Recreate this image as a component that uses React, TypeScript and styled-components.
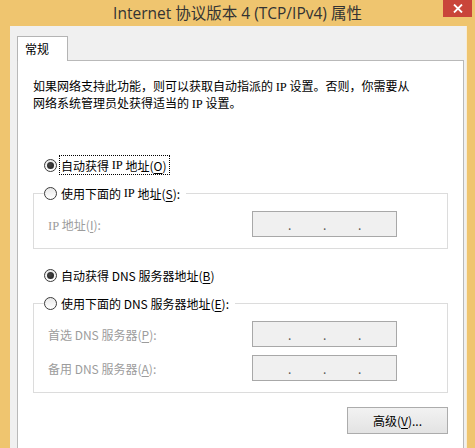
import React from "react";
import styled, { createGlobalStyle } from "styled-components";

const GlobalStyle = createGlobalStyle`
  html, body { margin: 0; padding: 0; }
  body {
    background: #efc56f;
    overflow: hidden;
    font-family: "Noto Sans CJK SC", "Noto Sans", sans-serif;
  }
`;

const Window = styled.div`
  width: 475px;
  height: 448px;
  display: flex;
  flex-direction: column;
  background: #efc56f;
  overflow: hidden;
`;

const TitleBar = styled.div`
  height: 26px;
  flex: none;
  display: grid;
  grid-template-columns: 1fr auto 1fr;
  align-items: center;
`;

const Title = styled.div`
  grid-column: 2;
  font-family: "Open Sans", "Noto Sans CJK SC", sans-serif;
  font-size: 15.5px;
  line-height: 26px;
  color: #333;
  white-space: nowrap;
`;

const CloseButton = styled.div`
  grid-column: 3;
  justify-self: end;
  align-self: start;
  width: 29px;
  height: 17px;
  margin-right: 3px;
  background: #c9453a;
  display: flex;
  align-items: center;
  justify-content: center;
`;

const Frame = styled.div`
  flex: 1;
  min-height: 0;
  display: flex;
  padding: 0 9px 0 10px;
`;

const Client = styled.div`
  flex: 1;
  display: flex;
  flex-direction: column;
  background: #f0f0f0;
  padding: 10px 2px 0 7px;
  box-shadow: 1px 0 0 #f7ecd6;
`;

const TabStrip = styled.div`
  display: flex;
  height: 25px;
  flex: none;
  margin-bottom: -1px;
`;

const Tab = styled.div`
  position: relative;
  z-index: 1;
  box-sizing: border-box;
  width: 51px;
  height: 25px;
  background: #fff;
  border: 1px solid #b4b4b4;
  border-bottom: none;
  padding-left: 7px;
  font-size: 12px;
  line-height: 24px;
  color: #000;
`;

const Panel = styled.div`
  flex: 1;
  display: flex;
  flex-direction: column;
  background: #fff;
  border: 1px solid #b9b9b9;
  border-bottom: none;
  padding: 16px 15px 0 15px;
`;

const Desc = styled.p`
  margin: 0;
  font-size: 12px;
  line-height: 17px;
  color: #000;
`;

const Serif = styled.span`
  font-family: "Liberation Serif", serif;
  font-size: 12.5px;
  line-height: 1;
`;

const RadioRow = styled.div<{ $top: number }>`
  display: flex;
  align-items: center;
  height: 20px;
  padding-left: 11px;
  margin-top: ${(p) => p.$top}px;
`;

const Circle = styled.span<{ $checked?: boolean }>`
  box-sizing: border-box;
  width: 13px;
  height: 13px;
  flex: none;
  border-radius: 50%;
  border: 1px solid #3a3a3a;
  background: linear-gradient(#e8e8e8, #ffffff);
  display: flex;
  align-items: center;
  justify-content: center;
  margin-right: 2px;
  &::after {
    content: "";
    display: ${(p) => (p.$checked ? "block" : "none")};
    width: 7px;
    height: 7px;
    border-radius: 50%;
    background: radial-gradient(circle at 40% 40%, #444, #1e1e1e);
  }
`;

const RadioLabel = styled.span<{ $focused?: boolean }>`
  box-sizing: border-box;
  height: 20px;
  display: flex;
  align-items: center;
  padding: 0 2px 0 1px;
  border: 1px ${(p) => (p.$focused ? "dotted #000" : "solid transparent")};
  font-size: 12px;
  color: #000;
  white-space: pre;
`;

const Key = styled.span`
  text-decoration: underline;
  text-underline-offset: 2px;
`;

const GroupBox = styled.fieldset`
  margin: 8px 0 0 0;
  padding: 0;
  border: 1px solid #dcdcdc;
  min-width: 0;
`;

const Legend = styled.legend`
  display: flex;
  align-items: center;
  height: 20px;
  padding: 0 3px 0 0;
  margin-left: 10px;
`;

const FieldGrid = styled.div`
  display: grid;
  grid-template-columns: 204px 145px;
  grid-auto-rows: 26px;
  row-gap: 8px;
  align-items: center;
  padding: 8px 0 11px 14px;
`;

const FieldLabel = styled.span`
  font-size: 12px;
  line-height: 17px;
  color: #9c9c9c;
  white-space: pre;
`;

const IpField = styled.div`
  box-sizing: border-box;
  height: 26px;
  border: 1px solid #a8a8a8;
  background: #f0f0f0;
  display: flex;
  justify-content: center;
  align-items: center;
  gap: 32px;
`;

const IpDot = styled.span`
  width: 3px;
  font-size: 12px;
  line-height: 12px;
  color: #555;
  text-align: center;
  margin-top: 1px;
`;

const ButtonRow = styled.div`
  display: flex;
  justify-content: flex-end;
  margin-top: 14px;
`;

const Button = styled.div`
  box-sizing: border-box;
  width: 101px;
  height: 27px;
  border: 1px solid #acacac;
  background: linear-gradient(#f2f2f2, #e3e3e3);
  display: flex;
  align-items: center;
  justify-content: center;
  font-size: 12px;
  color: #000;
`;

const IpBox = () => (
  <IpField>
    <IpDot>.</IpDot>
    <IpDot>.</IpDot>
    <IpDot>.</IpDot>
  </IpField>
);

export default function App() {
  return (
    <>
      <GlobalStyle />
      <Window>
        <TitleBar>
          <Title>Internet 协议版本 4 (TCP/IPv4) 属性</Title>
          <CloseButton>
            <svg width="10" height="9" viewBox="0 0 10 9">
              <path d="M1 0.5 L9 8.5 M9 0.5 L1 8.5" stroke="#fff" strokeWidth="1.8" />
            </svg>
          </CloseButton>
        </TitleBar>
        <Frame>
          <Client>
            <TabStrip>
              <Tab>常规</Tab>
            </TabStrip>
            <Panel>
              <Desc>
                如果网络支持此功能，则可以获取自动指派的 <Serif>IP</Serif> 设置。否则，你需要从
                <br />
                网络系统管理员处获得适当的 <Serif>IP</Serif> 设置。
              </Desc>

              <RadioRow $top={44}>
                <Circle $checked />
                <RadioLabel $focused>
                  自动获得 <Serif>IP</Serif> 地址(<Key>O</Key>)
                </RadioLabel>
              </RadioRow>

              <GroupBox>
                <Legend>
                  <Circle />
                  <RadioLabel>
                    使用下面的 <Serif>IP</Serif> 地址(<Key>S</Key>):
                  </RadioLabel>
                </Legend>
                <FieldGrid>
                  <FieldLabel>
                    <Serif>IP</Serif> 地址(<Key>I</Key>):
                  </FieldLabel>
                  <IpBox />
                </FieldGrid>
              </GroupBox>

              <RadioRow $top={16}>
                <Circle $checked />
                <RadioLabel>
                  自动获得 DNS 服务器地址(<Key>B</Key>)
                </RadioLabel>
              </RadioRow>

              <GroupBox>
                <Legend>
                  <Circle />
                  <RadioLabel>
                    使用下面的 DNS 服务器地址(<Key>E</Key>):
                  </RadioLabel>
                </Legend>
                <FieldGrid>
                  <FieldLabel>
                    首选 DNS 服务器(<Key>P</Key>):
                  </FieldLabel>
                  <IpBox />
                  <FieldLabel>
                    备用 DNS 服务器(<Key>A</Key>):
                  </FieldLabel>
                  <IpBox />
                </FieldGrid>
              </GroupBox>

              <ButtonRow>
                <Button>
                  高级(<Key>V</Key>)...
                </Button>
              </ButtonRow>
            </Panel>
          </Client>
        </Frame>
      </Window>
    </>
  );
}
